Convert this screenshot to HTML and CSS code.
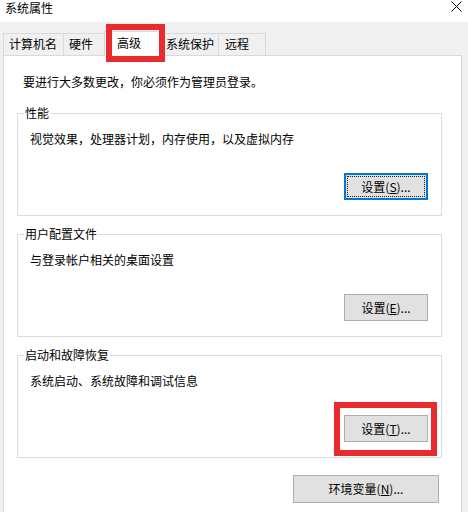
FILE: index.html
```html
<!DOCTYPE html>
<html lang="zh-CN">
<head>
<meta charset="utf-8">
<title>系统属性</title>
<link rel="stylesheet" href="styles.css">
</head>
<body>
<div class="window">
  <div class="titlebar">
    <span class="title">系统属性</span>
    <svg class="close" width="11" height="11" viewBox="0 0 11 11" aria-label="关闭">
      <path d="M0.5 0.5 L10.5 10.5 M10.5 0.5 L0.5 10.5" stroke="#000" stroke-width="1" fill="none"/>
    </svg>
  </div>
  <div class="tabs">
    <div class="tab t1">计算机名</div>
    <div class="tab t2">硬件</div>
    <div class="tab t3 active marked">高级</div>
    <div class="tab t4">系统保护</div>
    <div class="tab t5">远程</div>
  </div>
  <div class="panel">
    <p class="intro">要进行大多数更改，你必须作为管理员登录。</p>
    <fieldset class="group">
      <legend>性能</legend>
      <p class="desc">视觉效果，处理器计划，内存使用，以及虚拟内存</p>
      <div class="actions"><button class="btn focused">设置(<u>S</u>)...</button></div>
    </fieldset>
    <fieldset class="group">
      <legend>用户配置文件</legend>
      <p class="desc">与登录帐户相关的桌面设置</p>
      <div class="actions"><button class="btn">设置(<u>E</u>)...</button></div>
    </fieldset>
    <fieldset class="group">
      <legend>启动和故障恢复</legend>
      <p class="desc">系统启动、系统故障和调试信息</p>
      <div class="actions"><span class="mark-wrap"><button class="btn">设置(<u>T</u>)...</button></span></div>
    </fieldset>
    <div class="env-row"><button class="btn wide">环境变量(<u>N</u>)...</button></div>
  </div>
</div>
</body>
</html>
```
FILE: styles.css
```css
html, body {
  margin: 0;
  padding: 0;
}
body {
  width: 468px;
  height: 512px;
  overflow: hidden;
  background: #f0f0f0;
  font-family: "Noto Sans CJK SC", "Noto Sans", sans-serif;
  font-size: 12px;
  color: #000;
}
.window {
  width: 468px;
  height: 512px;
}
.titlebar {
  height: 22px;
  background: #fff;
  display: flex;
  justify-content: space-between;
  align-items: flex-start;
}
.title {
  padding-left: 5px;
  line-height: 16px;
}
.close {
  margin-top: 1px;
  margin-right: 6px;
  display: block;
}
.tabs {
  margin-top: 11px;
  padding-left: 3px;
  height: 22px;
  display: flex;
  align-items: flex-end;
}
.tab {
  box-sizing: border-box;
  height: 22px;
  line-height: 20px;
  border: 1px solid #d9d9d9;
  border-bottom: 0;
  margin-left: -1px;
  padding-left: 5px;
  white-space: nowrap;
}
.t1 { margin-left: 0; width: 61px; }
.t2 { width: 42px; }
.t3 { width: 57px; padding-left: 12px; }
.t4 { width: 59px; }
.t5 { width: 48px; padding-left: 6px; }
.tab.active {
  height: 25px;
  line-height: 22px;
  background: #fff;
  margin-bottom: -1px;
  position: relative;
  z-index: 2;
}
.marked::after {
  content: "";
  position: absolute;
  left: 1px;
  right: -5px;
  top: -8px;
  bottom: -6px;
  border: 6px solid #e92a2f;
}
.panel {
  box-sizing: border-box;
  margin-left: 3px;
  width: 459px;
  height: 470px;
  background: #fff;
  border: 1px solid #d9d9d9;
  padding-top: 18px;
  position: relative;
  z-index: 1;
}
.intro {
  margin: 0;
  padding-left: 19px;
  line-height: 16px;
}
.group {
  margin: 10px 19px 0 13px;
  padding: 10px 13px 15px 12px;
  border: 1px solid #dcdcdc;
  min-width: 0;
}
.intro + .group {
  margin-top: 15px;
}
.group legend {
  padding: 0 1px;
  margin-left: -6px;
  line-height: 16px;
}
.desc {
  margin: 0;
  line-height: 16px;
}
.actions {
  margin-top: 26px;
  display: flex;
  justify-content: flex-end;
}
.btn {
  box-sizing: border-box;
  width: 84px;
  height: 27px;
  padding: 0;
  background: #e1e1e1;
  border: 1px solid #adadad;
  border-radius: 0;
  font-family: inherit;
  font-size: 12px;
  color: #000;
  line-height: 16px;
}
.btn u {
  text-underline-offset: 1px;
}
.btn.focused {
  border-color: #0078d7;
  box-shadow: inset 0 0 0 1px #0078d7;
  outline: 1px dotted #222;
  outline-offset: -4px;
}
.btn.wide {
  width: 146px;
  height: 28px;
}
.mark-wrap {
  position: relative;
  display: block;
}
.mark-wrap .btn {
  display: block;
}
.mark-wrap::after {
  content: "";
  position: absolute;
  left: -10px;
  right: -9px;
  top: -13px;
  bottom: -14px;
  border: 6px solid #e92a2f;
}
.env-row {
  margin-top: 17px;
  padding-right: 22px;
  display: flex;
  justify-content: flex-end;
}
```
